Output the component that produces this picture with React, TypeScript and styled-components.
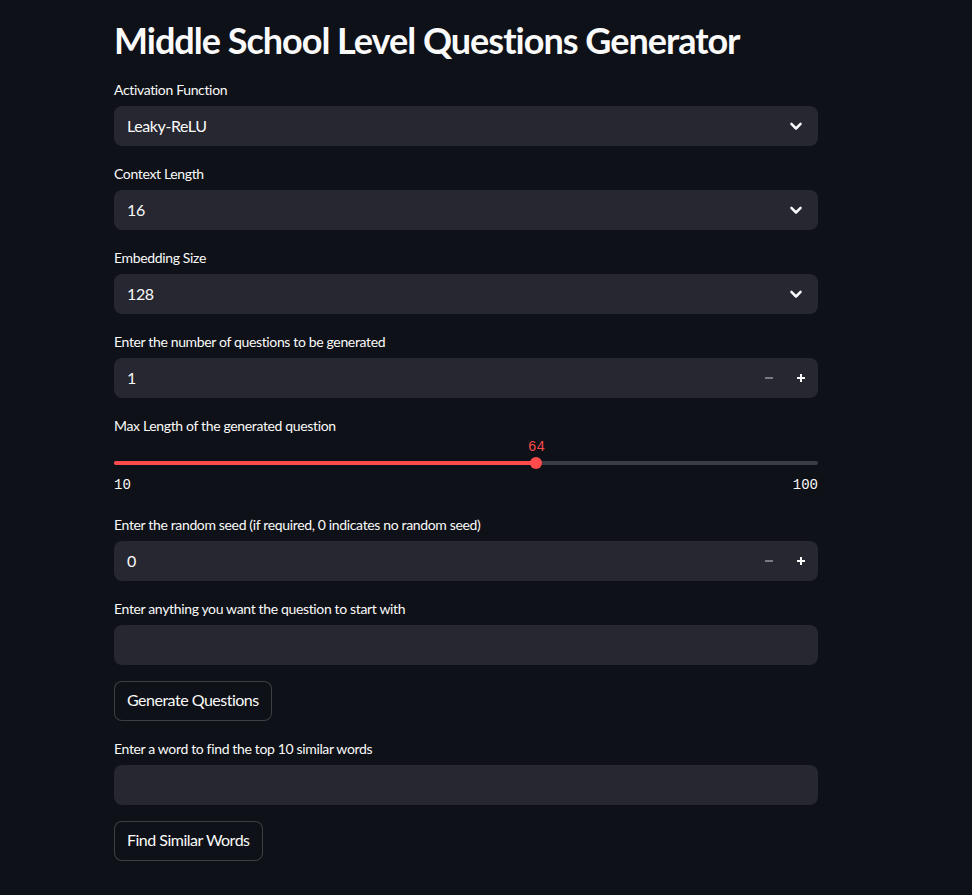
import React from 'react';
import styled, { createGlobalStyle } from 'styled-components';

const GlobalStyle = createGlobalStyle`
  html, body {
    margin: 0;
    background: #0e1117;
  }
  body {
    font-family: Lato, "Noto Sans", sans-serif;
    color: #fafafa;
  }
`;

const Page = styled.main`
  width: 704px;
  padding: 0 0 34px 114px;
  display: flex;
  flex-direction: column;
  gap: 16px;
`;

const Title = styled.h1`
  margin: 0;
  padding-top: 19px;
  font-size: 36px;
  line-height: 43px;
  font-weight: 700;
  letter-spacing: -1px;
  color: #fafafa;
`;

const Field = styled.div`
  display: flex;
  flex-direction: column;
`;

const Label = styled.label`
  height: 24px;
  margin-bottom: 4px;
  display: flex;
  align-items: center;
  padding-bottom: 1px;
  box-sizing: border-box;
  font-size: 14px;
  letter-spacing: -0.35px;
  color: #fafafa;
`;

const Box = styled.div`
  height: 40px;
  border-radius: 8px;
  background: #262730;
  display: flex;
  align-items: center;
  box-sizing: border-box;
  padding: 0 0 2px 13px;
  font-size: 16px;
  letter-spacing: -0.4px;
`;

const Value = styled.span`
  flex: 1;
`;

const Chevron = styled.svg`
  width: 20px;
  height: 20px;
  margin: 2px 12px 0 0;
`;

const StepButton = styled.button<{ $active?: boolean }>`
  width: 32px;
  height: 38px;
  border: none;
  background: transparent;
  padding: 2px 0 0;
  display: flex;
  align-items: center;
  justify-content: center;
  color: ${(p) => (p.$active ? '#fafafa' : 'rgba(250,250,250,0.4)')};
  &:last-child {
    margin-right: 1px;
  }
`;

const SliderWrap = styled.div`
  padding-bottom: 2px;
`;

const Track = styled.div`
  position: relative;
  margin-top: 19px;
  margin-bottom: 10px;
  height: 4px;
  border-radius: 2px;
  background: #3b3d46;
`;

const Fill = styled.div`
  height: 100%;
  border-radius: 2px;
  background: #ff4b4b;
`;

const Thumb = styled.div`
  position: absolute;
  top: -4px;
  width: 12px;
  height: 12px;
  margin-left: -6px;
  border-radius: 50%;
  background: #ff4b4b;
`;

const ThumbValue = styled.div`
  position: absolute;
  top: -22px;
  transform: translateX(-50%);
  font-family: "Liberation Mono", monospace;
  font-size: 14px;
  line-height: 16px;
  color: #ff4b4b;
`;

const Ticks = styled.div`
  display: flex;
  justify-content: space-between;
  height: 20px;
  align-items: center;
  font-family: "Liberation Mono", monospace;
  font-size: 14px;
  color: #fafafa;
`;

const Button = styled.button`
  align-self: flex-start;
  height: 40px;
  padding: 0 12px 3px;
  border-radius: 8px;
  border: 1px solid rgba(250, 250, 250, 0.2);
  background: #0e1117;
  color: #fafafa;
  font-family: inherit;
  font-size: 16px;
  letter-spacing: -0.5px;
`;

function ChevronDown() {
  return (
    <Chevron viewBox="0 0 24 24" fill="none" stroke="#fafafa" strokeWidth="3" strokeLinecap="round" strokeLinejoin="round">
      <path d="M6.5 9.5l5.5 5.5 5.5-5.5" />
    </Chevron>
  );
}

function Select({ label, value }: { label: string; value: string }) {
  return (
    <Field>
      <Label>{label}</Label>
      <Box>
        <Value>{value}</Value>
        <ChevronDown />
      </Box>
    </Field>
  );
}

function NumberInput({ label, value }: { label: string; value: number }) {
  return (
    <Field>
      <Label>{label}</Label>
      <Box>
        <Value>{value}</Value>
        <StepButton>
          <svg width="10" height="10" viewBox="0 0 10 10">
            <rect x="1" y="4" width="8" height="2" fill="currentColor" />
          </svg>
        </StepButton>
        <StepButton $active>
          <svg width="10" height="10" viewBox="0 0 10 10">
            <rect x="1" y="4" width="8" height="2" fill="currentColor" />
            <rect x="4" y="1" width="2" height="8" fill="currentColor" />
          </svg>
        </StepButton>
      </Box>
    </Field>
  );
}

function TextInput({ label }: { label: string }) {
  return (
    <Field>
      <Label>{label}</Label>
      <Box />
    </Field>
  );
}

function Slider({ label, min, max, value }: { label: string; min: number; max: number; value: number }) {
  const pct = ((value - min) / (max - min)) * 100;
  return (
    <Field>
      <Label>{label}</Label>
      <SliderWrap>
        <Track>
          <Fill style={{ width: `${pct}%` }} />
          <Thumb style={{ left: `${pct}%` }} />
          <ThumbValue style={{ left: `${pct}%` }}>{value}</ThumbValue>
        </Track>
        <Ticks>
          <span>{min}</span>
          <span>{max}</span>
        </Ticks>
      </SliderWrap>
    </Field>
  );
}

export default function App() {
  return (
    <>
      <GlobalStyle />
      <Page>
        <Title>Middle School Level Questions Generator</Title>
        <Select label="Activation Function" value="Leaky-ReLU" />
        <Select label="Context Length" value="16" />
        <Select label="Embedding Size" value="128" />
        <NumberInput label="Enter the number of questions to be generated" value={1} />
        <Slider label="Max Length of the generated question" min={10} max={100} value={64} />
        <NumberInput label="Enter the random seed (if required, 0 indicates no random seed)" value={0} />
        <TextInput label="Enter anything you want the question to start with" />
        <Button>Generate Questions</Button>
        <TextInput label="Enter a word to find the top 10 similar words" />
        <Button>Find Similar Words</Button>
      </Page>
    </>
  );
}
